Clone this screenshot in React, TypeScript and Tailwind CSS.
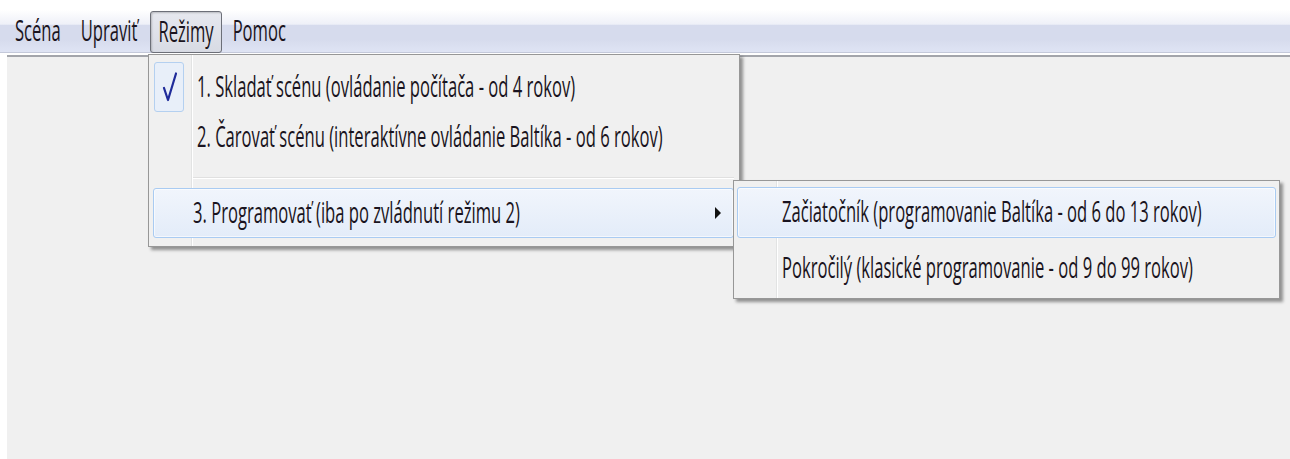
import type { ReactNode } from "react";

// Stretched Win7-style label: glyphs are tall and narrow
const Label = ({ children }: { children: ReactNode }) => (
  <span className="inline-block origin-center scale-y-[1.7] whitespace-nowrap leading-none">{children}</span>
);

const Check = () => (
  <svg width="15" height="30" viewBox="0 0 15 30" className="block">
    <path d="M2 16 L6 28 L14 1.5" fill="none" stroke="#1f2b9a" strokeWidth="2.2" strokeLinejoin="round" strokeLinecap="round" />
  </svg>
);

const Arrow = () => (
  <svg width="6" height="12" viewBox="0 0 6 12" className="block">
    <path d="M0 0 L6 6 L0 12 Z" fill="#111" />
  </svg>
);

const hot =
  "border border-[#a9cbf2] rounded-[3px] bg-[linear-gradient(to_bottom,#f1f5fc,#e3ecf9)] shadow-[inset_0_0_0_1px_rgba(255,255,255,0.6)]";

type Item = { label: string; checked?: boolean; active?: boolean };

const modes: Item[] = [
  { label: "1. Skladať scénu (ovládanie počítača - od 4 rokov)", checked: true },
  { label: "2. Čarovať scénu (interaktívne ovládanie Baltíka - od 6 rokov)" },
];

const levels: Item[] = [
  { label: "Začiatočník (programovanie Baltíka - od 6 do 13 rokov)", active: true },
  { label: "Pokročilý (klasické programovanie - od 9 do 99 rokov)" },
];

const Gutter = () => (
  <div className="absolute top-0 bottom-0 left-[42px] w-[2px] border-l border-[#e2e3e3] bg-white" />
);

export default function App() {
  return (
    <div className="relative flex h-[459px] w-[1290px] flex-col overflow-hidden bg-white font-['Open_Sans','Segoe_UI',sans-serif] text-[16.6px] text-[#1a1420]">
      {/* menu bar */}
      <div className="mt-[10px] flex h-[43px] items-stretch border-b border-[#c4c9da] bg-[linear-gradient(to_bottom,#ffffff_0%,#eef0f8_34%,#d6dbed_36%,#d6dbed_70%,#dfe4f4_100%)]">
        <div className="ml-[15px] flex items-center">
          <Label>Scéna</Label>
        </div>
        <div className="ml-[20px] flex items-center">
          <Label>Upraviť</Label>
        </div>
        <div className="-mb-[1px] ml-[13px] mt-[1px] flex items-center rounded-[3px] border border-[#6c6f78] bg-[linear-gradient(to_bottom,#e6e8ef,#d8dbe4)] px-[7px] shadow-[inset_1px_1px_2px_rgba(0,0,0,0.2)]">
          <Label>Režimy</Label>
        </div>
        <div className="ml-[11px] flex items-center">
          <Label>Pomoc</Label>
        </div>
      </div>

      {/* client area */}
      <div className="mt-[2px] ml-[7px] flex-1 border-t-2 border-[#a3a5ab] bg-[#f0f0f0]" />

      {/* Režimy dropdown */}
      <div className="absolute left-[148px] top-[54px] w-[592px] border border-[#979797] bg-[#f0f0f0] pt-[7px] pb-[8px] shadow-[3px_3px_3px_rgba(0,0,0,0.4)]">
        <Gutter />
        {modes.map((m) => (
          <div key={m.label} className="relative mx-[4px] flex h-[50px] items-center pl-[44px]">
            {m.checked && (
              <div className="absolute left-[1px] top-0 flex h-[50px] w-[30px] items-center justify-center rounded-[3px] border border-[#b4d0f0] bg-[#e8eff9]">
                <Check />
              </div>
            )}
            <Label>{m.label}</Label>
          </div>
        ))}
        <div className="relative ml-[44px] mr-[5px] mt-[15px] mb-[9px] h-[2px] border-t border-[#e0e0e0] bg-white" />
        <div className={`relative ml-[4px] mr-[5px] flex h-[50px] items-center pl-[39px] pr-[12px] ${hot}`}>
          <Label>3. Programovať (iba po zvládnutí režimu 2)</Label>
          <div className="ml-auto">
            <Arrow />
          </div>
        </div>
      </div>

      {/* Programovať submenu */}
      <div className="absolute left-[733px] top-[180px] flex w-[547px] flex-col gap-[5px] border border-[#979797] bg-[#f0f0f0] pt-[6px] pb-[4px] shadow-[3px_3px_3px_rgba(0,0,0,0.4)]">
        <Gutter />
        {levels.map((l) => (
          <div
            key={l.label}
            className={`relative ml-[3px] mr-[3px] flex h-[51px] items-center pl-[44px] ${l.active ? hot : "border border-transparent"}`}
          >
            <Label>{l.label}</Label>
          </div>
        ))}
      </div>
    </div>
  );
}
